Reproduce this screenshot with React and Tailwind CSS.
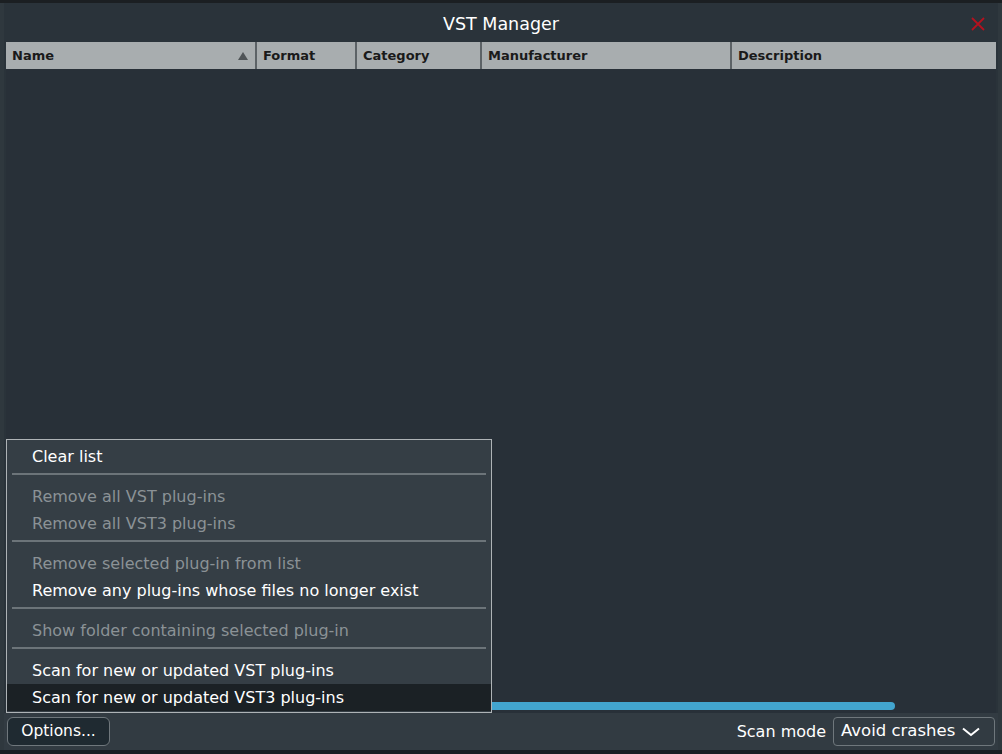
import React from 'react';

const font = { fontFamily: '"DejaVu Sans", Verdana, sans-serif' };

const columns = [
  { label: 'Name', w: 'w-[251px]', sort: true },
  { label: 'Format', w: 'w-[100px]' },
  { label: 'Category', w: 'w-[125px]' },
  { label: 'Manufacturer', w: 'w-[250px]' },
  { label: 'Description', w: 'flex-1' },
];

const menuGroups = [
  [{ label: 'Clear list' }],
  [
    { label: 'Remove all VST plug-ins', disabled: true },
    { label: 'Remove all VST3 plug-ins', disabled: true },
  ],
  [
    { label: 'Remove selected plug-in from list', disabled: true },
    { label: 'Remove any plug-ins whose files no longer exist' },
  ],
  [{ label: 'Show folder containing selected plug-in', disabled: true }],
  [
    { label: 'Scan for new or updated VST plug-ins' },
    { label: 'Scan for new or updated VST3 plug-ins', active: true },
  ],
];

function OptionsMenu() {
  return (
    <div className="absolute left-[2px] top-[436px] w-[486px] border border-[#aeb3b6] bg-[#353e45] pt-[3px] pb-[1px] text-[16px]">
      {menuGroups.map((group, gi) => (
        <div key={gi}>
          {gi > 0 && <div className="mx-[5px] mt-[3px] mb-[8px] h-[2px] bg-[#6c7479]" />}
          {group.map((item) => (
            <div
              key={item.label}
              className={
                'h-[27px] pl-[25px] leading-[27px] ' +
                (item.active ? 'bg-[#1b2125] ' : '') +
                (item.disabled ? 'text-[#8b9296]' : 'text-white')
              }
            >
              {item.label}
            </div>
          ))}
        </div>
      ))}
    </div>
  );
}

export default function App() {
  return (
    <div className="w-[1002px] h-[754px] bg-[#1b1f22] pt-[3px] pb-[4px]" style={font}>
      <div className="relative flex h-full flex-col border-x-[4px] border-[#2f383e] bg-[#2a333a]">
        {/* Title bar */}
        <div className="relative flex h-[39px] items-center justify-center pt-[3px]">
          <span className="text-[17.5px] text-white">VST Manager</span>
          <svg className="absolute right-[12px] top-[13px]" width="16" height="16" viewBox="0 0 16 16">
            <path d="M2 2 L14 14 M14 2 L2 14" stroke="#b3121f" strokeWidth="1.8" />
          </svg>
        </div>

        {/* Table */}
        <div className="mx-[2px] flex flex-1 flex-col bg-[#283038]">
          <div className="flex h-[27px] bg-[#a8adaf] text-[13px] font-bold text-[#1a1a1a]">
            {columns.map((c, i) => (
              <div
                key={c.label}
                className={
                  c.w +
                  ' relative flex items-center pl-[6px] ' +
                  (i < columns.length - 1 ? 'border-r-[2px] border-[#5c6266]' : '')
                }
              >
                {c.label}
                {c.sort && (
                  <svg className="absolute right-[7px] top-[10px]" width="10" height="8" viewBox="0 0 10 8">
                    <path d="M5 0 L10 8 L0 8 Z" fill="#4f5457" />
                  </svg>
                )}
              </div>
            ))}
          </div>
          <div className="flex-1" />
          <div className="mb-[3px] ml-[2px] mr-[101px] h-[8px] rounded-full bg-[#42a5cf]" />
        </div>

        {/* Bottom bar */}
        <div className="flex h-[37px] items-center justify-between bg-[#323b42] px-[3px]">
          <button className="flex h-[29px] w-[103px] items-center justify-center rounded-[6px] border border-[#6f777c] bg-[#1f2a31] text-[15.5px] text-white">
            Options...
          </button>
          <div className="flex items-center gap-[7px]">
            <span className="text-[16px] text-white">Scan mode</span>
            <div className="flex h-[29px] w-[162px] items-center justify-between rounded-[4px] border border-[#6f777c] pl-[7px] pr-[14px] text-[16.5px] text-white">
              <span>Avoid crashes</span>
              <svg width="18" height="10" viewBox="0 0 18 10">
                <path d="M1 1.5 L9 8 L17 1.5" stroke="white" strokeWidth="2" fill="none" />
              </svg>
            </div>
          </div>
        </div>

        <OptionsMenu />
      </div>
    </div>
  );
}
